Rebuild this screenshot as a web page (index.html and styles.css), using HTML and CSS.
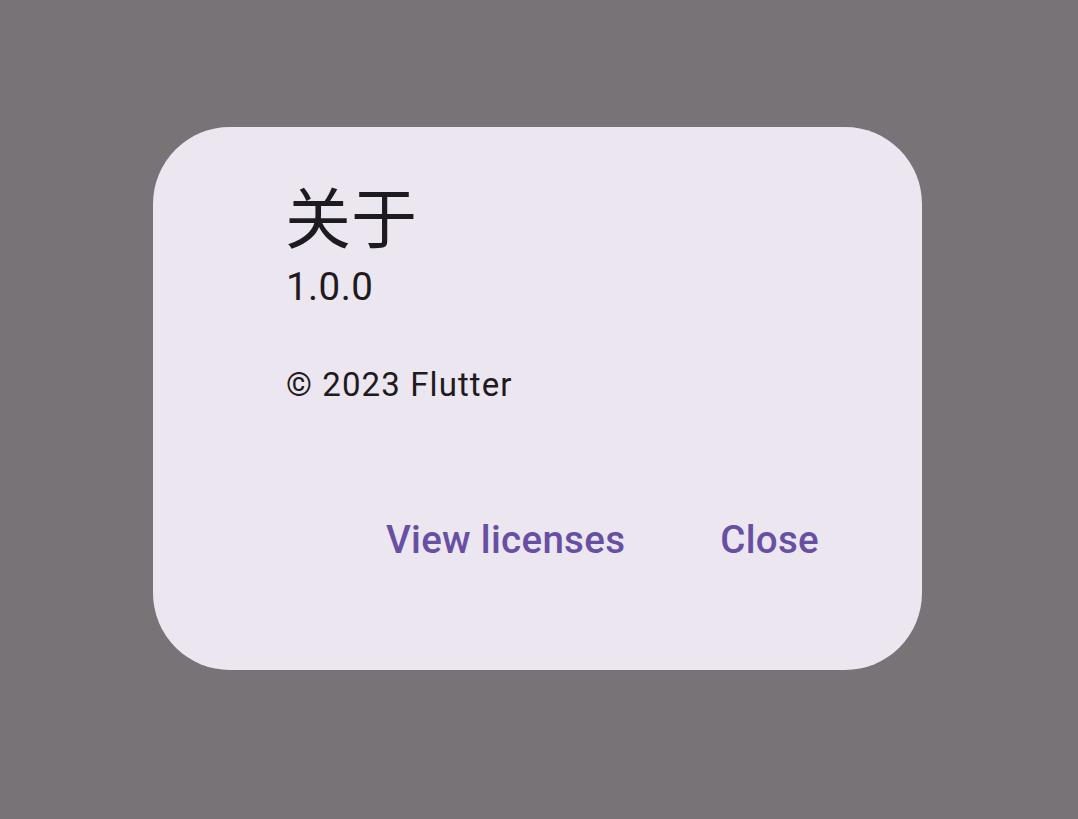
FILE: index.html
```html
<!DOCTYPE html>
<html lang="zh">
<head>
    <meta charset="UTF-8">
    <meta name="viewport" content="width=device-width, initial-scale=1.0">
    <title>关于</title>
    <link rel="stylesheet" href="styles.css">
</head>
<body>
    <div class="scrim">
        <!-- About dialog -->
        <div class="about-dialog" role="dialog">
            <div class="about-body">
                <h1 class="about-title">关于</h1>
                <div class="about-version">1.0.0</div>
                <p class="about-legal">© 2023 Flutter</p>
            </div>
            <div class="about-actions">
                <button class="text-button">View licenses</button>
                <button class="text-button">Close</button>
            </div>
        </div>
    </div>
</body>
</html>
```

FILE: styles.css
```css
* {
    margin: 0;
    padding: 0;
    box-sizing: border-box;
}

body {
    font-family: Roboto, "Noto Sans CJK SC", sans-serif;
    background: #787377;
    width: 1078px;
    height: 819px;
    overflow: hidden;
}

.scrim {
    padding: 127px 0 0 153px;
}

.about-dialog {
    width: 769px;
    background: #ece6f0;
    border-radius: 77px;
    padding: 43px 70px 76px 133px;
    display: flex;
    flex-direction: column;
}

.about-body {
    color: #1d1b20;
}

.about-title {
    margin-left: -1px;
    font-family: "Noto Sans CJK SC", Roboto, sans-serif;
    font-size: 66px;
    font-weight: 400;
    line-height: 89px;
}

.about-version {
    font-size: 38.5px;
    line-height: 55px;
    letter-spacing: 0.4px;
}

.about-legal {
    margin-top: 49px;
    font-size: 33px;
    line-height: 44px;
    letter-spacing: 1.1px;
}

.about-actions {
    margin-top: 77px;
    display: flex;
    justify-content: flex-end;
    gap: 29px;
}

.text-button {
    height: 110px;
    padding: 0 33px;
    border: none;
    background: none;
    color: #6750a4;
    font-family: Roboto, sans-serif;
    font-size: 38.5px;
    font-weight: 500;
    line-height: 55px;
    letter-spacing: 0.3px;
    cursor: pointer;
}
```
